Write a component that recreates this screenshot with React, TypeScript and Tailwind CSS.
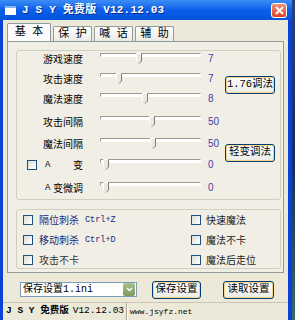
import React from "react"

const cjk = "font-['Noto_Sans_CJK_SC',sans-serif]"
const mono = "font-['Liberation_Mono','Noto_Sans_CJK_SC',monospace]"

const rows = [
  { label: "游戏速度", pos: 36, value: "7", h: "h-[20px]" },
  { label: "攻击速度", pos: 16, value: "7", h: "h-[20px]" },
  { label: "魔法速度", pos: 42, value: "8", h: "h-[23px]" },
  { label: "攻击间隔", pos: 49, value: "50", h: "h-[22px]" },
  { label: "魔法间隔", pos: 50, value: "50", h: "h-[21px]" },
]

function Thumb() {
  return (
    <svg width="6" height="11" viewBox="0 0 6 11">
      <path d="M0.5 0.5 H5.5 V8 L3 10.5 L0.5 8 Z" fill="#ece9d8" />
      <path d="M0.5 8 V0.5 H5" stroke="#ffffff" fill="none" />
      <path d="M5.5 0.5 V8 L3 10.5" stroke="#7a7a7a" fill="none" />
    </svg>
  )
}

function Slider({ pos }: { pos: number }) {
  return (
    <div className="relative w-[101px] h-[12px] shrink-0">
      <div className="h-[4px] border-t border-l border-t-[#9d9b90] border-l-[#9d9b90] border-b border-r border-b-white border-r-white bg-white" />
      <div className="absolute top-0" style={{ left: pos }}>
        <Thumb />
      </div>
    </div>
  )
}

function Box() {
  return <div className="w-[10px] h-[10px] shrink-0 border border-[#1c5180] bg-linear-to-br from-[#dcdcd6] to-white" />
}

function XpButton({ children, w }: { children: React.ReactNode; w: string }) {
  return (
    <div className={`${w} h-[18px] rounded-[3px] border border-[#003c74] bg-linear-to-b from-white to-[#ecebe4] shadow-[inset_0_0_0_1px_#f5d48b] flex items-center justify-center text-[10.5px] text-black ${mono}`}>
      {children}
    </div>
  )
}

function Tab({ label, active }: { label: string; active?: boolean }) {
  if (active)
    return (
      <div className={`w-[44px] h-[18px] -mb-px border border-b-0 border-[#919b9c] rounded-t-[2px] bg-[#fcfcfe] flex items-center justify-center text-[11px] text-black z-10 ${mono}`}>
        {label}
      </div>
    )
  return (
    <div className={`w-[39px] h-[15px] mt-[3px] border border-b-0 border-[#919b9c] rounded-t-[2px] bg-linear-to-b from-white to-[#ecebe5] flex items-center justify-center text-[11px] text-black ${mono}`}>
      {label}
    </div>
  )
}

export default function App() {
  return (
    <div className="w-[295px] h-[320px] overflow-hidden flex bg-[#1d2c66] select-none">
      <div className="w-[292px] h-full flex flex-col bg-[#0842d6]">
        {/* title bar */}
        <div className="h-[20px] shrink-0 flex items-center bg-linear-to-b from-[#3d8df5] via-[#0a5fe8] to-[#0453dd] pl-[5px] pr-[5px]">
          <div className="w-[11px] h-[9px] bg-white border-t-2 border-[#8ab4f0]" />
          <div className={`ml-[6px] text-[11px] font-bold text-white tracking-[0.2px] ${mono} [text-shadow:1px_1px_0_#0a2a8a]`}>
            J S Y 免费版 V12.12.03
          </div>
          <div className="ml-auto w-[16px] h-[15px] rounded-[3px] border border-white bg-linear-to-b from-[#f0907a] to-[#d8431e] flex items-center justify-center">
            <svg width="9" height="9" viewBox="0 0 9 9">
              <path d="M1 1 L8 8 M8 1 L1 8" stroke="white" strokeWidth="1.8" />
            </svg>
          </div>
        </div>

        {/* body */}
        <div className="flex-1 ml-[3px] mr-[4px] bg-[#ece9d8] flex flex-col">
          <div className="pl-[4px] pt-[3px] flex items-start gap-[2px]">
            <Tab label="基 本" active />
            <Tab label="保 护" />
            <Tab label="喊 话" />
            <Tab label="辅 助" />
          </div>

          <div className="ml-[4px] w-[277px] h-[232px] border border-[#919b9c] bg-[#f1efe5] pl-[8px] pt-[8px]">
            {/* group 1 */}
            <div className="w-[265px] h-[150px] border border-[#d0d0bf] rounded-[3px] flex">
              <div className="pt-[2px] flex flex-col">
                {rows.map((r) => (
                  <div key={r.label} className={`flex items-start ${r.h}`}>
                    <div className={`w-[66px] text-right text-[10px] leading-[12px] text-black ${cjk}`}>{r.label}</div>
                    <div className="ml-[17px]">
                      <Slider pos={r.pos} />
                    </div>
                    <div className="ml-[7px] text-[10px] leading-[12px] text-[#4040a8] font-['Liberation_Sans',sans-serif]">{r.value}</div>
                  </div>
                ))}
                <div className="flex items-start h-[23px]">
                  <div className={`w-[66px] flex items-center text-[10px] leading-[12px] text-black ${cjk}`}>
                    <div className="ml-[10px]">
                      <Box />
                    </div>
                    <span className="ml-[8px] text-[9px] font-['Liberation_Mono',monospace]">A</span>
                    <span className="ml-auto">变</span>
                  </div>
                  <div className="ml-[17px]">
                    <Slider pos={3} />
                  </div>
                  <div className="ml-[7px] text-[10px] leading-[12px] text-[#4040a8] font-['Liberation_Sans',sans-serif]">0</div>
                </div>
                <div className="flex items-start">
                  <div className={`w-[66px] flex items-center text-[10px] leading-[12px] text-black ${cjk}`}>
                    <span className="ml-[28px] text-[9px] font-['Liberation_Mono',monospace]">A</span>
                    <span className="ml-auto">变微调</span>
                  </div>
                  <div className="ml-[17px]">
                    <Slider pos={3} />
                  </div>
                  <div className="ml-[7px] text-[10px] leading-[12px] text-[#4040a8] font-['Liberation_Sans',sans-serif]">0</div>
                </div>
              </div>
              <div className="ml-auto mr-[5px] pt-[25px] flex flex-col gap-[50px]">
                <XpButton w="w-[50px]">1.76调法</XpButton>
                <XpButton w="w-[50px]">轻变调法</XpButton>
              </div>
            </div>

            {/* group 2 */}
            <div className="mt-[9px] w-[265px] h-[60px] border border-[#d0d0bf] rounded-[3px] flex pt-[4px]">
              <div className="ml-[6px] flex flex-col gap-[8px]">
                {[
                  { t: "隔位刺杀", k: "Ctrl+Z", c: "text-[#26267a]" },
                  { t: "移动刺杀", k: "Ctrl+D", c: "text-[#26267a]" },
                  { t: "攻击不卡", k: "", c: "text-[#333333]" },
                ].map((o) => (
                  <div key={o.t} className={`flex items-center h-[12px] gap-[6px] ${o.c}`}>
                    <Box />
                    <span className={`text-[10px] leading-[12px] ${cjk}`}>{o.t}</span>
                    {o.k && <span className="text-[8.5px] font-['Liberation_Mono',monospace]">{o.k}</span>}
                  </div>
                ))}
              </div>
              <div className="ml-auto mr-[22px] flex flex-col gap-[8px]">
                {["快速魔法", "魔法不卡", "魔法后走位"].map((t) => (
                  <div key={t} className="flex items-center h-[12px] gap-[5px] text-[#222222]">
                    <Box />
                    <span className={`w-[52px] text-[10px] leading-[12px] ${cjk}`}>{t}</span>
                  </div>
                ))}
              </div>
            </div>
          </div>

          {/* bottom controls */}
          <div className="mt-[8px] h-[17px] flex items-center">
            <div className="ml-[17px] w-[117px] h-[15px] border border-[#7f9db9] bg-white flex items-center">
              <span className={`ml-[2px] text-[10px] text-black ${mono}`}>保存设置1.ini</span>
              <div className="ml-auto mr-px w-[12px] h-[13px] rounded-[2px] bg-linear-to-b from-[#a9c08c] to-[#7d9a5c] flex items-center justify-center">
                <svg width="7" height="5" viewBox="0 0 7 5">
                  <path d="M1 1 L3.5 3.5 L6 1" stroke="white" strokeWidth="1.5" fill="none" />
                </svg>
              </div>
            </div>
            <div className="ml-[15px]">
              <XpButton w="w-[49px]">保存设置</XpButton>
            </div>
            <div className="ml-[22px]">
              <XpButton w="w-[51px]">读取设置</XpButton>
            </div>
          </div>

          {/* status bar */}
          <div className="mt-auto h-[18px] border-t border-[#c8c5b5] flex items-stretch">
            <div className={`w-[123px] flex items-center pl-[3px] text-[9.5px] text-black ${mono}`}>
              <span className="font-bold">J S Y 免费版</span>
              <span className="ml-[4px]">V12.12.03</span>
            </div>
            <div className="w-[2px] border-l border-[#aca899] border-r border-r-white" />
            <div className={`flex-1 flex items-center pl-[2px] text-[8px] text-black font-['Liberation_Mono',monospace]`}>www.jsyfz.net</div>
          </div>
        </div>
      </div>
      <div className="flex-1 bg-linear-to-b from-[#2b3f80] via-[#1a2a5e] to-[#3a6a60]" />
    </div>
  )
}
